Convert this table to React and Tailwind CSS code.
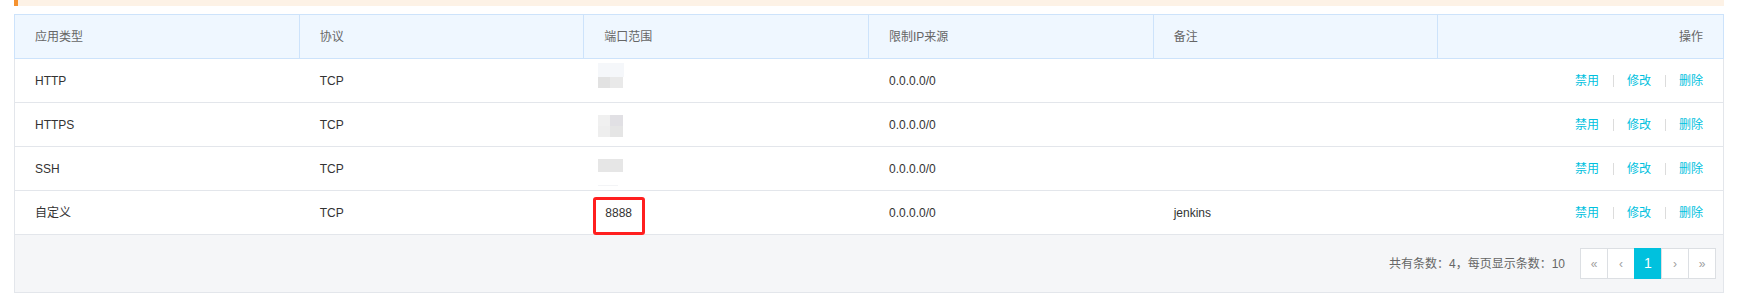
import React from "react";

const columns = ["应用类型", "协议", "端口范围", "限制IP来源", "备注", "操作"];

const rules = [
  { type: "HTTP", proto: "TCP", port: "blur1", ip: "0.0.0.0/0", note: "" },
  { type: "HTTPS", proto: "TCP", port: "blur2", ip: "0.0.0.0/0", note: "" },
  { type: "SSH", proto: "TCP", port: "blur3", ip: "0.0.0.0/0", note: "" },
  { type: "自定义", proto: "TCP", port: "8888", ip: "0.0.0.0/0", note: "jenkins" },
];

// redacted port values, drawn as the grey smudges from the screenshot
const Smudge = ({ kind }) => {
  if (kind === "blur1") {
    return (
      <div className="self-start mt-[4px] ml-[-7px] flex flex-col">
        <div className="w-[26px] h-[14px] bg-[#f5f7fa]" />
        <div className="flex">
          <div className="w-[12px] h-[11px] bg-[#e2e2e2]" />
          <div className="w-[13px] h-[11px] bg-[#e9e9e9]" />
        </div>
      </div>
    );
  }
  if (kind === "blur2") {
    return (
      <div className="self-start mt-[12px] ml-[-7px] grid grid-cols-[12px_13px]">
        <div className="h-[11px] bg-[#f0f0f0]" />
        <div className="h-[11px] bg-[#e1e0e4]" />
        <div className="h-[11px] bg-[#eeeeee]" />
        <div className="h-[11px] bg-[#e5e5e5]" />
      </div>
    );
  }
  return (
    <div className="self-start mt-[12px] ml-[-7px] flex flex-col">
      <div className="w-[25px] h-[13px] bg-[#e6e6e6]" />
      <div className="w-[20px] h-[1px] mt-[13px] bg-[#f3f4f6]" />
    </div>
  );
};

const PageBtn = ({ children, active }) => (
  <button
    className={`w-[28px] h-[31px] -ml-px first:ml-0 border flex items-center justify-center ${
      active
        ? "bg-[#00c1de] border-[#00c1de] text-white text-[14px]"
        : "bg-white border-[#dcdfe3] text-[#a0a0a0] text-[12px]"
    }`}
  >
    {children}
  </button>
);

const Sep = () => <div className="w-px h-[12px] ml-[14px] mr-[13px] bg-[#dcdcdc]" />;

export default function App() {
  return (
    <div
      className="w-[1739px] h-[301px] bg-white overflow-hidden text-[12px]"
      style={{ fontFamily: '"Liberation Sans", "Noto Sans CJK SC", sans-serif' }}
    >
      {/* bottom edge of the notice box above */}
      <div className="ml-[14px] w-[1710px] h-[6px] flex">
        <div className="w-[4px] bg-[#f5922f]" />
        <div className="flex-1 bg-[#fdf2e6]" />
      </div>

      <div className="ml-[14px] mt-[8px] w-[1710px]">
        {/* header */}
        <div className="grid grid-cols-6 h-[45px] border border-[#cde3fb] bg-[#eff7ff] text-[#666]">
          {columns.map((col, i) => (
            <div
              key={col}
              className={`flex items-center px-[20px] ${
                i < columns.length - 1 ? "border-r border-[#cde3fb]" : "justify-end"
              }`}
            >
              {col}
            </div>
          ))}
        </div>

        {/* body */}
        {rules.map((r) => (
          <div
            key={r.type}
            className="grid grid-cols-6 h-[44px] border-x border-b border-[#e3e6eb] text-[#333]"
          >
            <div className="flex items-center px-[20px]">{r.type}</div>
            <div className="flex items-center px-[20px]">{r.proto}</div>
            <div className="flex items-center px-[20px] pl-[21px]">
              {r.port.startsWith("blur") ? (
                <Smudge kind={r.port} />
              ) : (
                <span className="relative leading-[16px]">
                  {r.port}
                  <span className="absolute left-[-12px] top-[-8px] w-[52px] h-[38px] border-[3px] border-[#ff1f1f] rounded-[3px]" />
                </span>
              )}
            </div>
            <div className="flex items-center px-[20px]">{r.ip}</div>
            <div className="flex items-center px-[20px]">{r.note}</div>
            <div className="flex items-center justify-end px-[20px] text-[#00c1de]">
              <a>禁用</a>
              <Sep />
              <a>修改</a>
              <Sep />
              <a>删除</a>
            </div>
          </div>
        ))}

        {/* footer / pagination */}
        <div className="h-[58px] border-x border-b border-[#e3e6eb] bg-[#f5f6f8] flex items-center justify-end pr-[7px]">
          <span className="text-[#666] mr-[15px]">共有条数：4，每页显示条数：10</span>
          <div className="flex">
            <PageBtn>«</PageBtn>
            <PageBtn>‹</PageBtn>
            <PageBtn active>1</PageBtn>
            <PageBtn>›</PageBtn>
            <PageBtn>»</PageBtn>
          </div>
        </div>
      </div>
    </div>
  );
}
